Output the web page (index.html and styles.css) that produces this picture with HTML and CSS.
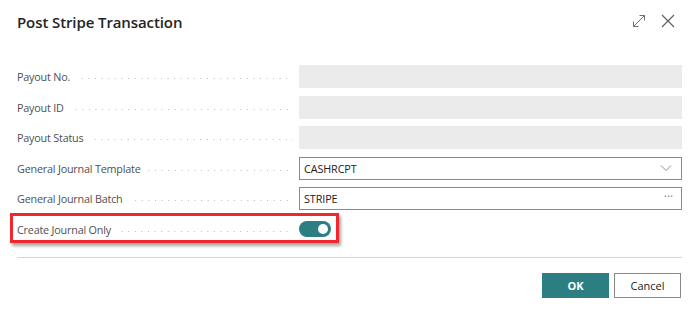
FILE: index.html
```html
<!DOCTYPE html>
<html lang="en">
<head>
<meta charset="utf-8">
<title>Post Stripe Transaction</title>
<link rel="stylesheet" href="styles.css">
</head>
<body>
<div class="dialog">
  <header class="head">
    <h1 class="title">Post Stripe Transaction</h1>
    <div class="head-actions">
      <svg class="icon" width="14" height="14" viewBox="0 0 14 14" aria-hidden="true">
        <path d="M1.5 12.5 L12.5 1.5 M7.5 1.5 H12.5 V6.5 M1.5 7.5 V12.5 H6.5" fill="none" stroke="#707070" stroke-width="1"/>
      </svg>
      <svg class="icon" width="14" height="14" viewBox="0 0 14 14" aria-hidden="true">
        <path d="M1 1 L13 13 M13 1 L1 13" fill="none" stroke="#616161" stroke-width="1.2"/>
      </svg>
    </div>
  </header>

  <div class="form">
    <div class="row">
      <div class="label"><span>Payout No.</span><i class="leader"></i></div>
      <div class="field readonly"></div>
    </div>
    <div class="row">
      <div class="label"><span>Payout ID</span><i class="leader"></i></div>
      <div class="field readonly"></div>
    </div>
    <div class="row">
      <div class="label"><span>Payout Status</span><i class="leader"></i></div>
      <div class="field readonly"></div>
    </div>
    <div class="row">
      <div class="label"><span>General Journal Template</span><i class="leader"></i></div>
      <div class="field edit"><span class="value">CASHRCPT</span>
        <svg class="chev" width="12" height="8" viewBox="0 0 12 8" aria-hidden="true"><path d="M1 1.5 L6 6.5 L11 1.5" fill="none" stroke="#8a8a8a" stroke-width="1"/></svg>
      </div>
    </div>
    <div class="row">
      <div class="label"><span>General Journal Batch</span><i class="leader"></i></div>
      <div class="field edit"><span class="value">STRIPE</span><span class="more">···</span></div>
    </div>
    <div class="row row-highlight">
      <div class="label"><span>Create Journal Only</span><i class="leader"></i></div>
      <div class="toggle-cell"><span class="toggle"><span class="knob"></span></span></div>
    </div>
  </div>

  <div class="sep"></div>

  <footer class="foot">
    <button class="btn btn-primary">OK</button>
    <button class="btn btn-secondary">Cancel</button>
  </footer>
</div>
</body>
</html>
```

FILE: styles.css
```css
html, body {
  margin: 0;
  padding: 0;
  background: #ffffff;
}

body {
  font-family: "Open Sans", "Noto Sans", sans-serif;
  color: #212121;
}

.dialog {
  width: 699px;
  height: 316px;
  box-sizing: border-box;
  padding: 0 17px;
}

.head {
  height: 65px;
  display: flex;
  align-items: flex-start;
  justify-content: space-between;
}

.title {
  margin: 11px 0 0 0;
  font-size: 15px;
  font-weight: 600;
  line-height: 22px;
  color: #242424;
  letter-spacing: -0.1px;
}

.head-actions {
  display: flex;
  gap: 15px;
  margin-top: 14px;
  margin-right: 7px;
}

.icon {
  display: block;
}

.form {
  display: flex;
  flex-direction: column;
  gap: 7.5px;
}

.row {
  display: grid;
  grid-template-columns: 282px 1fr;
  height: 23px;
  align-items: center;
  position: relative;
}

.label {
  display: flex;
  align-items: center;
  font-size: 10.8px;
  letter-spacing: -0.2px;
  color: #505050;
  white-space: nowrap;
}

.leader {
  flex: 1;
  height: 1px;
  margin: 4px 6px 0 7px;
  background-image: linear-gradient(to right, #b8b8b8 1px, transparent 1px);
  background-size: 6.6px 1px;
  background-repeat: repeat-x;
  background-position: right top;
}

.field {
  height: 23px;
  box-sizing: border-box;
}

.readonly {
  background: #ebebeb;
}

.edit {
  border: 1px solid #8a8886;
  display: flex;
  align-items: center;
  justify-content: space-between;
  padding: 0 8px 0 4px;
  font-size: 10.8px;
  letter-spacing: -0.1px;
  color: #212121;
}

.chev {
  display: block;
  margin-right: 1px;
}

.more {
  color: #8a8a8a;
  font-size: 12px;
  line-height: 1;
  margin-top: -3px;
}

.toggle-cell {
  display: flex;
  align-items: center;
}

.toggle {
  width: 32px;
  height: 16px;
  border-radius: 8px;
  background: #2b7f83;
  display: flex;
  align-items: center;
  justify-content: flex-end;
  padding: 0 3px;
  box-sizing: border-box;
}

.knob {
  width: 10px;
  height: 10px;
  border-radius: 50%;
  background: #ffffff;
}

.row-highlight::after {
  content: "";
  position: absolute;
  left: -7px;
  top: -4.5px;
  width: 329px;
  height: 30px;
  box-sizing: border-box;
  border: 3px solid #f0282d;
  box-shadow: 2px 3px 3px rgba(0, 0, 0, 0.35);
  pointer-events: none;
}

.sep {
  height: 1px;
  background: #d6d6d6;
  margin-top: 16.5px;
}

.foot {
  display: flex;
  justify-content: flex-end;
  gap: 5px;
  margin-top: 15px;
  margin-right: 1px;
}

.btn {
  width: 67px;
  height: 25px;
  box-sizing: border-box;
  font-family: "Open Sans", "Noto Sans", sans-serif;
  font-size: 11px;
  padding: 0;
  margin: 0;
}

.btn-primary {
  background: #2b7f83;
  color: #ffffff;
  border: 1px solid #2b7f83;
  font-weight: 700;
}

.btn-secondary {
  background: #ffffff;
  color: #212121;
  border: 1px solid #8a8886;
}
```
